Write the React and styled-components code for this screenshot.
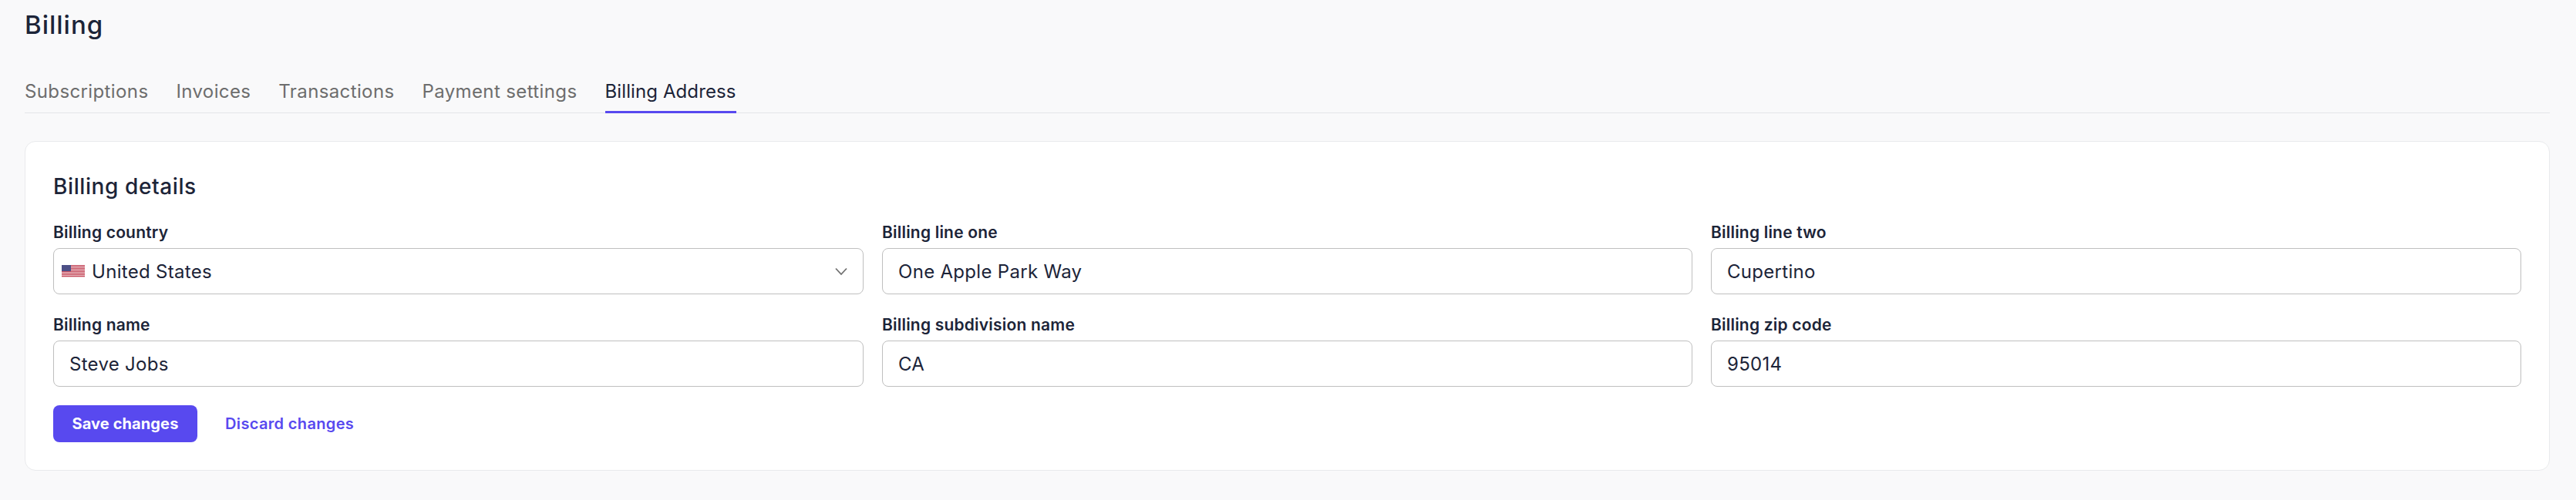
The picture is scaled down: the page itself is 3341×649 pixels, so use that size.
import styled, { createGlobalStyle } from "styled-components";

const GlobalStyle = createGlobalStyle`
  html, body {
    margin: 0;
    background: #f9f9fa;
  }
  * {
    box-sizing: border-box;
  }
`;

const Page = styled.div`
  min-height: 649px;
  padding: 12px 34px 0 32px;
  background: #f9f9fa;
  color: #1c2438;
  font-family: Inter, "Liberation Sans", sans-serif;
`;
const Title = styled.h1`
  margin: 0 0 51px;
  font-size: 33px;
  line-height: 40px;
  font-weight: 500;
  letter-spacing: 1px;
`;
const Tabs = styled.nav`
  display: flex;
  gap: 36px;
  border-bottom: 1px solid #e4e6e9;
`;
const Tab = styled.a`
  margin-bottom: -1px;
  padding-bottom: 9px;
  font-size: 24px;
  line-height: 32px;
  letter-spacing: ${(p) => (p.$active ? "0.1px" : "0.38px")};
  color: ${(p) => (p.$active ? "#1c2438" : "#6d6d6d")};
  border-bottom: 3px solid ${(p) => (p.$active ? "#5849ef" : "transparent")};
`;
const Card = styled.section`
  margin-top: 36px;
  padding: 40px 36px 36px;
  background: #fff;
  border: 1px solid #e9eaec;
  border-radius: 14px;
`;
const CardTitle = styled.h2`
  margin: 0 0 30px;
  font-size: 28px;
  line-height: 36px;
  font-weight: 500;
  letter-spacing: 0.6px;
`;
const Grid = styled.div`
  display: grid;
  grid-template-columns: repeat(3, 1fr);
  gap: 28px 24px;
`;
const Field = styled.label`
  display: flex;
  flex-direction: column;
  gap: 8px;
`;
const LabelText = styled.span`
  font-size: 21px;
  line-height: 24px;
  font-weight: 600;
  letter-spacing: 0.2px;
`;
const Input = styled.input`
  height: 60px;
  padding: 0 20px;
  background: #fff;
  border: 1px solid #bfbfbf;
  border-radius: 8px;
  color: #1c2438;
  font: 400 24px Inter, "Liberation Sans", sans-serif;
  letter-spacing: 0.3px;
  outline: none;
`;
const Select = styled.div`
  display: flex;
  align-items: center;
  gap: 9px;
  height: 60px;
  padding: 0 19px 0 10px;
  background: #fff;
  border: 1px solid #bfbfbf;
  border-radius: 8px;
  font-size: 24px;
  letter-spacing: 0.3px;
`;
const SelectValue = styled.span`
  flex: 1;
`;
const Actions = styled.div`
  display: flex;
  align-items: center;
  gap: 36px;
  margin-top: 24px;
`;
const SaveButton = styled.button`
  width: 187px;
  height: 48px;
  padding: 0;
  background: #5849ef;
  border: none;
  border-radius: 8px;
  color: #fff;
  font: 700 20px Inter, "Liberation Sans", sans-serif;
  letter-spacing: 0.1px;
`;
const DiscardLink = styled.a`
  color: #5849ef;
  font-size: 20px;
  font-weight: 600;
  letter-spacing: 0.35px;
`;

const stripes = [0, 2, 4, 6, 8, 10, 12, 14];

const UsFlag = () => (
  <svg width="30" height="16" viewBox="0 0 30 16" aria-hidden="true">
    <rect width="30" height="16" fill="#f6e4e4" />
    {stripes.map((y) => (
      <rect key={y} y={y} width="30" height="1.2" fill="#c4475a" />
    ))}
    <rect width="12" height="8" fill="#4c4f86" />
  </svg>
);

const Chevron = () => (
  <svg width="18" height="11" viewBox="0 0 18 11" fill="none" aria-hidden="true">
    <path d="M2 1.5 9 9l7-7.5" stroke="#707070" strokeWidth="1.8" />
  </svg>
);

const tabs = ["Subscriptions", "Invoices", "Transactions", "Payment settings", "Billing Address"];

export default function App() {
  return (
    <Page>
      <GlobalStyle />
      <Title>Billing</Title>
      <Tabs>
        {tabs.map((t) => (
          <Tab key={t} $active={t === "Billing Address"}>
            {t}
          </Tab>
        ))}
      </Tabs>
      <Card>
        <CardTitle>Billing details</CardTitle>
        <Grid>
          <Field>
            <LabelText>Billing country</LabelText>
            <Select>
              <UsFlag />
              <SelectValue>United States</SelectValue>
              <Chevron />
            </Select>
          </Field>
          <Field>
            <LabelText>Billing line one</LabelText>
            <Input defaultValue="One Apple Park Way" />
          </Field>
          <Field>
            <LabelText>Billing line two</LabelText>
            <Input defaultValue="Cupertino" />
          </Field>
          <Field>
            <LabelText>Billing name</LabelText>
            <Input defaultValue="Steve Jobs" />
          </Field>
          <Field>
            <LabelText>Billing subdivision name</LabelText>
            <Input defaultValue="CA" />
          </Field>
          <Field>
            <LabelText>Billing zip code</LabelText>
            <Input defaultValue="95014" />
          </Field>
        </Grid>
        <Actions>
          <SaveButton>Save changes</SaveButton>
          <DiscardLink>Discard changes</DiscardLink>
        </Actions>
      </Card>
    </Page>
  );
}
